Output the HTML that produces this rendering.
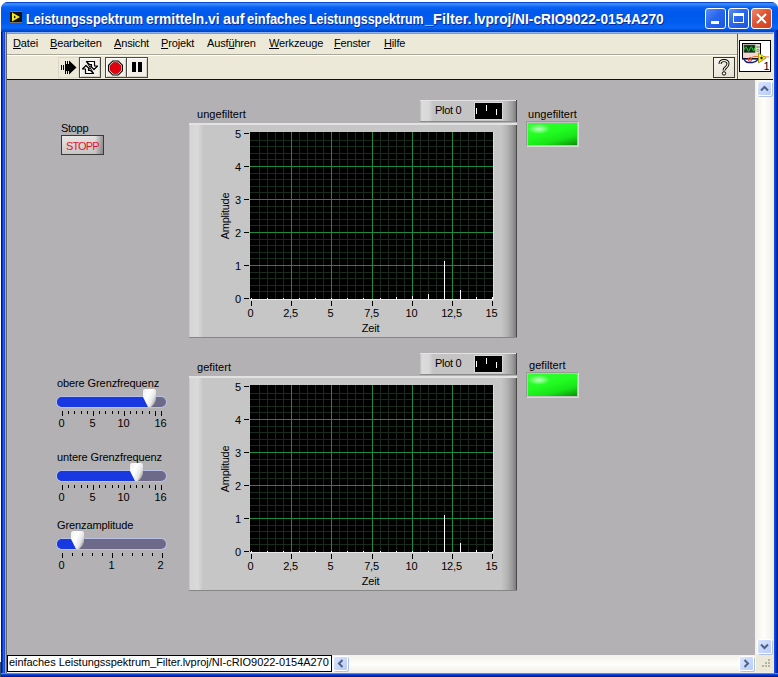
<!DOCTYPE html><html><head><meta charset="utf-8"><style>
html,body{margin:0;padding:0;}
body{width:778px;height:677px;overflow:hidden;position:relative;background:#fff;font-family:"Liberation Sans",sans-serif;}
.a{position:absolute;}
.t{position:absolute;white-space:pre;font-size:11px;line-height:13px;color:#000;}
#win{left:1px;top:2px;width:777px;height:675px;background:#0846d8;border-radius:7px 7px 0 0;}
#title{left:1px;top:2px;width:777px;height:30px;border-radius:7px 7px 0 0;
 background:linear-gradient(#0a48c8 0px,#0a48c8 1px,#3c8cfc 1px,#3282f8 3px,#0a62f4 5px,#0058ec 10px,#005cf0 20px,#0866f8 26px,#0050d8 28px,#0040c0 30px);}
.ttext{top:11px;font-weight:bold;font-size:14px;line-height:17px;color:#fff;transform-origin:0 0;text-shadow:1px 1px 0 #0a2a90;}
#client{left:5px;top:32px;width:769px;height:641px;background:#ece9d8;}
#panel{left:7px;top:80px;width:748px;height:575px;background:#b3b1b3;}
.tbtn{position:absolute;width:21px;height:21px;box-sizing:border-box;}
.xpb{position:absolute;width:21px;height:21px;box-sizing:border-box;border:1px solid #fff;border-radius:3px;}
.u{text-decoration:underline;}
.frame{position:absolute;box-sizing:border-box;}
</style></head><body>
<div class="a" id="win"></div>
<div class="a" id="title"></div>
<svg class="a" style="left:10px;top:11px" width="12" height="12" viewBox="0 0 12 12">
<rect x="0" y="0" width="12" height="12" fill="#101010"/>
<path d="M0.5 0.5 H11.5 M0.5 11.5 H11.5" stroke="#d8d8c0" stroke-width="1" stroke-dasharray="1 1"/>
<path d="M2 1.5 L2 10.5 L10 6 Z" fill="#f4e81c"/>
<path d="M4 4.5 L6 6 L4 7.5 Z" fill="#101010"/>
</svg>
<div class="t ttext" style="left:25.8px;transform:scaleX(0.9055)">Leistungsspektrum</div>
<div class="t ttext" style="left:146.1px;transform:scaleX(0.9853)">ermitteln.vi</div>
<div class="t ttext" style="left:223.1px;transform:scaleX(1.0286)">auf</div>
<div class="t ttext" style="left:246.8px;transform:scaleX(0.9211)">einfaches</div>
<div class="t ttext" style="left:309.1px;transform:scaleX(0.8877)">Leistungsspektrum</div>
<div class="t ttext" style="left:425.4px;transform:scaleX(1.0333)">_Filter.</div>
<div class="t ttext" style="left:474.0px;transform:scaleX(0.9788)">lvproj/NI-cRIO9022-0154A270</div>
<div class="xpb" style="left:705px;top:8px;background:linear-gradient(135deg,#5a8ef8 0%,#2a66ee 45%,#1a55e0 100%);"><div class="a" style="left:5px;top:12px;width:8px;height:3px;background:#fff"></div></div>
<div class="xpb" style="left:728px;top:8px;background:linear-gradient(135deg,#5a8ef8 0%,#2a66ee 45%,#1a55e0 100%);"><div class="a" style="left:4px;top:4px;width:11px;height:10px;box-sizing:border-box;border:1px solid #fff;border-top-width:3px"></div></div>
<div class="xpb" style="left:751px;top:8px;background:linear-gradient(135deg,#f08a68 0%,#e05430 45%,#d04020 100%);">
<svg class="a" style="left:3px;top:3px" width="13" height="13" viewBox="0 0 13 13"><path d="M2 2 L11 11 M11 2 L2 11" stroke="#fff" stroke-width="2"/></svg></div>
<div class="a" id="client"></div>
<div class="a" style="left:5px;top:32px;width:769px;height:1px;background:#8fb0f0"></div>
<div class="a" style="left:6px;top:33px;width:767px;height:1px;background:#9a9888"></div>
<div class="a" style="left:6px;top:33px;width:1px;height:640px;background:#9a9888"></div>
<div class="a" style="left:5px;top:32px;width:1px;height:641px;background:#8fb0f0"></div>
<div class="a" style="left:1px;top:32px;width:1px;height:641px;background:#00158e"></div>
<div class="a" style="left:2px;top:32px;width:1px;height:641px;background:#0538d0"></div>
<div class="a" style="left:3px;top:32px;width:1px;height:641px;background:#2c5cf4"></div>
<div class="a" style="left:4px;top:32px;width:1px;height:641px;background:#1a48c8"></div>
<div class="a" style="left:5px;top:32px;width:1px;height:641px;background:#8eaee0"></div>
<div class="a" style="left:6px;top:32px;width:1px;height:641px;background:#666666"></div>
<div class="a" style="left:774px;top:30px;width:1px;height:647px;background:#1a50e0"></div>
<div class="a" style="left:775px;top:30px;width:1px;height:647px;background:#0040d8"></div>
<div class="a" style="left:776px;top:30px;width:1px;height:647px;background:#0030b8"></div>
<div class="a" style="left:777px;top:30px;width:1px;height:647px;background:#00188e"></div>
<div class="a" style="left:1px;top:673px;width:777px;height:1px;background:#5a8ae8"></div>
<div class="a" style="left:1px;top:674px;width:777px;height:1px;background:#0a44d8"></div>
<div class="a" style="left:1px;top:675px;width:777px;height:1px;background:#0032c0"></div>
<div class="a" style="left:1px;top:676px;width:777px;height:1px;background:#001890"></div>
<div class="t" style="left:13px;top:37px;letter-spacing:-0.15px"><span class="u">D</span>atei</div>
<div class="t" style="left:50px;top:37px;letter-spacing:-0.15px"><span class="u">B</span>earbeiten</div>
<div class="t" style="left:114px;top:37px;letter-spacing:-0.15px"><span class="u">A</span>nsicht</div>
<div class="t" style="left:161px;top:37px;letter-spacing:-0.15px"><span class="u">P</span>rojekt</div>
<div class="t" style="left:207px;top:37px;letter-spacing:-0.15px">Ausf<span class="u">ü</span>hren</div>
<div class="t" style="left:269px;top:37px;letter-spacing:-0.15px"><span class="u">W</span>erkzeuge</div>
<div class="t" style="left:334px;top:37px;letter-spacing:-0.15px"><span class="u">F</span>enster</div>
<div class="t" style="left:384px;top:37px;letter-spacing:-0.15px"><span class="u">H</span>ilfe</div>
<div class="a" style="left:7px;top:54px;width:730px;height:1px;background:#aca899"></div>
<div class="a" style="left:7px;top:55px;width:730px;height:1px;background:#fff"></div>
<div class="a" style="left:737px;top:34px;width:1px;height:45px;background:#5a5a5a"></div>
<div class="a" style="left:7px;top:79px;width:766px;height:1px;background:#101010"></div>
<div class="tbtn" style="left:58px;top:57px;width:21px;background:#ece9d8;border:1px solid #dcd8c8">
<svg class="a" style="left:-1px;top:-1px" width="21" height="21" viewBox="0 0 21 21">
<g fill="#000">
<rect x="3" y="8" width="1" height="5"/><rect x="5" y="8" width="1" height="5"/>
<rect x="7" y="4" width="1" height="3"/><rect x="9" y="4" width="1" height="3"/>
<rect x="7" y="14" width="1" height="3"/><rect x="9" y="14" width="1" height="3"/>
<rect x="7" y="7" width="5" height="7"/>
<path d="M11 3.5 L18.5 10.5 L11 17.5 Z"/>
</g></svg></div>
<div class="tbtn" style="left:79px;top:57px;width:22px;background:#f2f0e8;border:1px solid #4a4a40;box-shadow:inset 1px 1px 0 #fff,inset -1px -1px 0 #d4d0c4">
<svg class="a" style="left:-1px;top:-1px" width="22" height="21" viewBox="0 0 22 21">
<path d="M7.5 4.5 H15.5 V9 H18.5 L15 12.5 L11.5 9 H12.5 V7.5 H10.5 Z" fill="#fff" stroke="#000" stroke-width="1.2" stroke-linejoin="round"/>
<path d="M14.5 16.5 H6.5 V12 H3.5 L7 8.5 L10.5 12 H9.5 V13.5 H11.5 Z" fill="#fff" stroke="#000" stroke-width="1.2" stroke-linejoin="round"/>
<path d="M7.5 4.5 L14.5 16.5" stroke="#000" stroke-width="1"/>
</svg></div>
<div class="tbtn" style="left:105px;top:57px;width:22px;background:#f2f0e8;border:1px solid #4a4a40;box-shadow:inset 1px 1px 0 #fff,inset -1px -1px 0 #d4d0c4">
<svg class="a" style="left:-1px;top:-1px" width="22" height="21" viewBox="0 0 22 21">
<path d="M7.5 3.5 H13.5 L18 8 V14 L13.5 18.5 H7.5 L3 14 V8 Z" fill="#000"/>
<path d="M7.9 4.5 H13.1 L17 8.4 V13.6 L13.1 17.5 H7.9 L4 13.6 V8.4 Z" fill="#f4dcdc"/>
<path d="M8.3 5.5 H12.7 L16 8.8 V13.2 L12.7 16.5 H8.3 L5 13.2 V8.8 Z" fill="#e00010" stroke="#900" stroke-width=".6"/>
</svg></div>
<div class="tbtn" style="left:126px;top:57px;width:22px;background:#f2f0e8;border:1px solid #4a4a40;box-shadow:inset 1px 1px 0 #fff,inset -1px -1px 0 #d4d0c4">
<div class="a" style="left:5px;top:4px;width:4px;height:10px;background:#000"></div>
<div class="a" style="left:11px;top:4px;width:4px;height:10px;background:#000"></div>
</div>
<div class="tbtn" style="left:713px;top:57px;width:22px;background:linear-gradient(160deg,#f8f6f0,#e4e0d4);border:1px solid #3a3628">
<svg class="a" style="left:-1px;top:-1px" width="22" height="21" viewBox="0 0 22 21">
<path d="M7 7 Q7 3.6 11 3.6 Q15 3.6 15 6.8 Q15 8.8 13 10.2 Q11 11.6 11 13.4" stroke="#000" stroke-width="3" fill="none"/>
<path d="M7 7 Q7 3.6 11 3.6 Q15 3.6 15 6.8 Q15 8.8 13 10.2 Q11 11.6 11 13.4" stroke="#fafae4" stroke-width="1.1" fill="none"/>
<circle cx="11" cy="16.4" r="1.7" fill="#fafae4" stroke="#000" stroke-width="1"/>
</svg></div>
<div class="a" style="left:739px;top:40px;width:32px;height:32px;box-sizing:border-box;border:1px solid #000;background:#fff">
<svg class="a" style="left:0;top:0" width="30" height="30" viewBox="0 0 30 30">
<rect x="2.5" y="2.5" width="18" height="15" fill="#d4d0c8" stroke="#000" stroke-width="1"/>
<rect x="4" y="4" width="11" height="7.5" fill="#0a3010" stroke="#606060" stroke-width=".6"/>
<path d="M4.5 8.5 Q5.8 3.5 7.2 8 T9.9 8 T12.6 8 T14.6 7" stroke="#30d040" fill="none" stroke-width="1"/>
<rect x="16" y="4" width="4" height="8" fill="#e6e2c8"/>
<circle cx="17.2" cy="6" r=".9" fill="#888"/><circle cx="19" cy="6" r=".9" fill="#999"/><circle cx="18" cy="9.5" r="1.2" fill="none" stroke="#6a6a40" stroke-width=".7"/>
<rect x="3" y="12" width="17" height="5" fill="#f2d8cc"/>
<rect x="2" y="17" width="18" height="1.6" fill="#101030"/>
<path d="M3.5 17 Q5 21.5 8.5 21.5 L12.5 21.5 Q15.5 21.5 18 18.5" stroke="#101a7a" fill="none" stroke-width="1.3"/>
<path d="M10 17.5 Q14 14.5 18 15.5 L29 16" stroke="#e06828" fill="none" stroke-width=".9"/>
<circle cx="10" cy="18.5" r="1.8" fill="none" stroke="#d83a20" stroke-width="1"/>
<path d="M18.5 12 L18.5 22 L26 17 Z" fill="#f4f020" stroke="#8a8a10" stroke-width=".8"/>
<path d="M20 17 L21.5 15.5 L23 17 L21.5 18.5 Z" fill="#101010"/>
<text x="23.5" y="28.5" font-family="Liberation Sans" font-size="11" fill="#000">1</text>
</svg></div>
<div class="a" id="panel"></div>
<div class="a" style="left:7px;top:80px;width:1px;height:575px;background:#c0b8a8"></div>
<div class="t" style="left:61px;top:122px;letter-spacing:-0.3px">Stopp</div>
<div class="a" style="left:61px;top:135px;width:43px;height:20px;box-sizing:border-box;border:1px solid #3a3a3a;
background:linear-gradient(90deg,rgba(0,0,0,0) 0%,rgba(0,0,0,0) 80%,rgba(60,60,60,.45) 100%),linear-gradient(175deg,#ece8e8 0%,#d8d4d4 50%,#c4c0c0 100%);">
<div class="t" style="left:4px;top:4px;color:#e0142e;letter-spacing:-0.9px">STOPP</div></div>
<div class="t" style="left:197px;top:108px;letter-spacing:0.05px">ungefiltert</div>
<div class="frame" style="left:420px;top:100px;width:97px;height:22px;background:#c4c4c4;
border-top:1px solid #e4e4e4;border-bottom:1px solid #8a8a8a;">
<div class="a" style="left:0;top:0;width:13px;height:20px;background:linear-gradient(90deg,#bdbdbd 0px,#dcdcdc 2px,#d8d8d8 9px,#c4c4c4 13px)"></div>
<div class="a" style="left:83px;top:0;width:13px;height:20px;background:linear-gradient(90deg,#c4c4c4 0%,#b2b2b2 40%,#9a9a9a 75%,#7c7c7c 100%)"></div><div class="a" style="left:96px;top:-1px;width:1px;height:22px;background:#4a4a4a"></div>
<div class="t" style="left:15px;top:3px;letter-spacing:-0.3px">Plot 0</div>
<div class="a" style="left:54px;top:1px;width:29px;height:18px;background:#000;border:1px solid #d8d8d8;box-sizing:border-box">
<div class="a" style="left:1px;top:5px;width:1px;height:6px;background:#fff"></div>
<div class="a" style="left:11px;top:2px;width:1px;height:6px;background:#fff"></div>
<div class="a" style="left:21px;top:6px;width:1px;height:6px;background:#fff"></div>
</div></div>
<div class="frame" style="left:189px;top:123px;width:328px;height:215px;background:#c6c6c6;
border-top:2px solid #e2e2e2;border-bottom:1px solid #868686;">
<div class="a" style="left:0;top:0;width:14px;height:212px;background:linear-gradient(90deg,#bcbcbc 0px,#d6d6d6 1px,#dadada 9px,#d2d2d2 11px,#c6c6c6 14px)"></div>
<div class="a" style="left:312px;top:0;width:15px;height:212px;background:linear-gradient(90deg,#c6c6c6 0%,#b4b4b4 40%,#9a9a9a 75%,#7c7c7c 100%)"></div><div class="a" style="left:327px;top:0;width:1px;height:212px;background:#4a4a4a"></div>
</div>
<svg class="a" style="left:250px;top:132px" width="244" height="168" viewBox="0 0 244 168"><rect width="244" height="168" fill="#000"/><rect x="9" y="0" width="1" height="167" fill="#182a1c"/><rect x="17" y="0" width="1" height="167" fill="#182a1c"/><rect x="25" y="0" width="1" height="167" fill="#182a1c"/><rect x="33" y="0" width="1" height="167" fill="#182a1c"/><rect x="49" y="0" width="1" height="167" fill="#182a1c"/><rect x="57" y="0" width="1" height="167" fill="#182a1c"/><rect x="65" y="0" width="1" height="167" fill="#182a1c"/><rect x="73" y="0" width="1" height="167" fill="#182a1c"/><rect x="89" y="0" width="1" height="167" fill="#182a1c"/><rect x="97" y="0" width="1" height="167" fill="#182a1c"/><rect x="105" y="0" width="1" height="167" fill="#182a1c"/><rect x="113" y="0" width="1" height="167" fill="#182a1c"/><rect x="130" y="0" width="1" height="167" fill="#182a1c"/><rect x="138" y="0" width="1" height="167" fill="#182a1c"/><rect x="146" y="0" width="1" height="167" fill="#182a1c"/><rect x="154" y="0" width="1" height="167" fill="#182a1c"/><rect x="170" y="0" width="1" height="167" fill="#182a1c"/><rect x="178" y="0" width="1" height="167" fill="#182a1c"/><rect x="186" y="0" width="1" height="167" fill="#182a1c"/><rect x="194" y="0" width="1" height="167" fill="#182a1c"/><rect x="210" y="0" width="1" height="167" fill="#182a1c"/><rect x="218" y="0" width="1" height="167" fill="#182a1c"/><rect x="226" y="0" width="1" height="167" fill="#182a1c"/><rect x="234" y="0" width="1" height="167" fill="#182a1c"/><rect x="0" y="8" width="243" height="1" fill="#182a1c"/><rect x="0" y="14" width="243" height="1" fill="#182a1c"/><rect x="0" y="21" width="243" height="1" fill="#182a1c"/><rect x="0" y="27" width="243" height="1" fill="#182a1c"/><rect x="0" y="41" width="243" height="1" fill="#182a1c"/><rect x="0" y="47" width="243" height="1" fill="#182a1c"/><rect x="0" y="54" width="243" height="1" fill="#182a1c"/><rect x="0" y="60" width="243" height="1" fill="#182a1c"/><rect x="0" y="74" width="243" height="1" fill="#182a1c"/><rect x="0" y="80" width="243" height="1" fill="#182a1c"/><rect x="0" y="87" width="243" height="1" fill="#182a1c"/><rect x="0" y="93" width="243" height="1" fill="#182a1c"/><rect x="0" y="107" width="243" height="1" fill="#182a1c"/><rect x="0" y="113" width="243" height="1" fill="#182a1c"/><rect x="0" y="120" width="243" height="1" fill="#182a1c"/><rect x="0" y="126" width="243" height="1" fill="#182a1c"/><rect x="0" y="140" width="243" height="1" fill="#182a1c"/><rect x="0" y="146" width="243" height="1" fill="#182a1c"/><rect x="0" y="153" width="243" height="1" fill="#182a1c"/><rect x="0" y="159" width="243" height="1" fill="#182a1c"/><rect x="41" y="0" width="1" height="167" fill="#1e8a3c"/><rect x="81" y="0" width="1" height="167" fill="#1e8a3c"/><rect x="122" y="0" width="1" height="167" fill="#1e8a3c"/><rect x="162" y="0" width="1" height="167" fill="#1e8a3c"/><rect x="202" y="0" width="1" height="167" fill="#1e8a3c"/><rect x="0" y="34" width="243" height="1" fill="#1e8a3c"/><rect x="0" y="67" width="243" height="1" fill="#1e8a3c"/><rect x="0" y="100" width="243" height="1" fill="#1e8a3c"/><rect x="0" y="133" width="243" height="1" fill="#1e8a3c"/><rect x="0" y="167" width="244" height="1" fill="#e8e8e8"/><rect x="243" y="0" width="1" height="168" fill="#dcdcdc"/><rect x="1" y="166" width="1" height="1" fill="#fff"/><rect x="17" y="166" width="1" height="1" fill="#fff"/><rect x="33" y="166" width="1" height="1" fill="#fff"/><rect x="49" y="166" width="1" height="1" fill="#fff"/><rect x="65" y="166" width="1" height="1" fill="#fff"/><rect x="81" y="166" width="1" height="1" fill="#fff"/><rect x="97" y="166" width="1" height="1" fill="#fff"/><rect x="113" y="166" width="1" height="1" fill="#fff"/><rect x="130" y="166" width="1" height="1" fill="#fff"/><rect x="146" y="165" width="1" height="2" fill="#fff"/><rect x="162" y="164" width="1" height="3" fill="#fff"/><rect x="178" y="162" width="1" height="5" fill="#fff"/><rect x="194" y="129" width="1" height="38" fill="#fff"/><rect x="210" y="158" width="1" height="9" fill="#fff"/><rect x="226" y="165" width="1" height="2" fill="#fff"/><rect x="242" y="165" width="1" height="2" fill="#fff"/></svg>
<div class="a" style="left:244px;top:133px;width:5px;height:1px;background:#000"></div>
<div class="t" style="left:226px;top:128px;width:15px;text-align:right">5</div>
<div class="a" style="left:244px;top:166px;width:5px;height:1px;background:#000"></div>
<div class="t" style="left:226px;top:161px;width:15px;text-align:right">4</div>
<div class="a" style="left:244px;top:199px;width:5px;height:1px;background:#000"></div>
<div class="t" style="left:226px;top:194px;width:15px;text-align:right">3</div>
<div class="a" style="left:244px;top:232px;width:5px;height:1px;background:#000"></div>
<div class="t" style="left:226px;top:227px;width:15px;text-align:right">2</div>
<div class="a" style="left:244px;top:265px;width:5px;height:1px;background:#000"></div>
<div class="t" style="left:226px;top:260px;width:15px;text-align:right">1</div>
<div class="a" style="left:244px;top:298px;width:5px;height:1px;background:#000"></div>
<div class="t" style="left:226px;top:293px;width:15px;text-align:right">0</div>
<div class="a" style="left:251px;top:301px;width:1px;height:5px;background:#000"></div>
<div class="t" style="left:230px;top:307px;width:41px;text-align:center;letter-spacing:-0.2px">0</div>
<div class="a" style="left:291px;top:301px;width:1px;height:5px;background:#000"></div>
<div class="t" style="left:270px;top:307px;width:41px;text-align:center;letter-spacing:-0.2px">2,5</div>
<div class="a" style="left:331px;top:301px;width:1px;height:5px;background:#000"></div>
<div class="t" style="left:310px;top:307px;width:41px;text-align:center;letter-spacing:-0.2px">5</div>
<div class="a" style="left:372px;top:301px;width:1px;height:5px;background:#000"></div>
<div class="t" style="left:351px;top:307px;width:41px;text-align:center;letter-spacing:-0.2px">7,5</div>
<div class="a" style="left:412px;top:301px;width:1px;height:5px;background:#000"></div>
<div class="t" style="left:391px;top:307px;width:41px;text-align:center;letter-spacing:-0.2px">10</div>
<div class="a" style="left:452px;top:301px;width:1px;height:5px;background:#000"></div>
<div class="t" style="left:431px;top:307px;width:41px;text-align:center;letter-spacing:-0.2px">12,5</div>
<div class="a" style="left:492px;top:301px;width:1px;height:5px;background:#000"></div>
<div class="t" style="left:471px;top:307px;width:41px;text-align:center;letter-spacing:-0.2px">15</div>
<div class="t" style="left:350px;top:322px;width:41px;text-align:center;letter-spacing:-0.2px">Zeit</div>
<div class="t" style="left:200px;top:210px;width:50px;text-align:center;transform:rotate(-90deg);transform-origin:25px 6px;letter-spacing:-0.25px">Amplitude</div>
<div class="t" style="left:528px;top:108px;letter-spacing:0.05px">ungefiltert</div>
<div class="a" style="left:526px;top:121px;width:53px;height:26px;box-sizing:border-box;background:#c0c0c0;border:1px solid;border-color:#9a9a9a #d8d8d8 #d8d8d8 #9a9a9a">
<div class="a" style="left:1px;top:1px;width:49px;height:22px;background:radial-gradient(ellipse 11px 5px at 11px 6px,#c0ffc0 0%,rgba(120,255,120,0) 100%),linear-gradient(165deg,#34ff34 0%,#22fc22 45%,#18e418 72%,#0ea80e 92%,#0a8a0a 100%)"></div></div>
<div class="t" style="left:197px;top:361px;letter-spacing:0.05px">gefitert</div>
<div class="frame" style="left:420px;top:353px;width:97px;height:22px;background:#c4c4c4;
border-top:1px solid #e4e4e4;border-bottom:1px solid #8a8a8a;">
<div class="a" style="left:0;top:0;width:13px;height:20px;background:linear-gradient(90deg,#bdbdbd 0px,#dcdcdc 2px,#d8d8d8 9px,#c4c4c4 13px)"></div>
<div class="a" style="left:83px;top:0;width:13px;height:20px;background:linear-gradient(90deg,#c4c4c4 0%,#b2b2b2 40%,#9a9a9a 75%,#7c7c7c 100%)"></div><div class="a" style="left:96px;top:-1px;width:1px;height:22px;background:#4a4a4a"></div>
<div class="t" style="left:15px;top:3px;letter-spacing:-0.3px">Plot 0</div>
<div class="a" style="left:54px;top:1px;width:29px;height:18px;background:#000;border:1px solid #d8d8d8;box-sizing:border-box">
<div class="a" style="left:1px;top:5px;width:1px;height:6px;background:#fff"></div>
<div class="a" style="left:11px;top:2px;width:1px;height:6px;background:#fff"></div>
<div class="a" style="left:21px;top:6px;width:1px;height:6px;background:#fff"></div>
</div></div>
<div class="frame" style="left:189px;top:376px;width:328px;height:215px;background:#c6c6c6;
border-top:2px solid #e2e2e2;border-bottom:1px solid #868686;">
<div class="a" style="left:0;top:0;width:14px;height:212px;background:linear-gradient(90deg,#bcbcbc 0px,#d6d6d6 1px,#dadada 9px,#d2d2d2 11px,#c6c6c6 14px)"></div>
<div class="a" style="left:312px;top:0;width:15px;height:212px;background:linear-gradient(90deg,#c6c6c6 0%,#b4b4b4 40%,#9a9a9a 75%,#7c7c7c 100%)"></div><div class="a" style="left:327px;top:0;width:1px;height:212px;background:#4a4a4a"></div>
</div>
<svg class="a" style="left:250px;top:385px" width="244" height="168" viewBox="0 0 244 168"><rect width="244" height="168" fill="#000"/><rect x="9" y="0" width="1" height="167" fill="#182a1c"/><rect x="17" y="0" width="1" height="167" fill="#182a1c"/><rect x="25" y="0" width="1" height="167" fill="#182a1c"/><rect x="33" y="0" width="1" height="167" fill="#182a1c"/><rect x="49" y="0" width="1" height="167" fill="#182a1c"/><rect x="57" y="0" width="1" height="167" fill="#182a1c"/><rect x="65" y="0" width="1" height="167" fill="#182a1c"/><rect x="73" y="0" width="1" height="167" fill="#182a1c"/><rect x="89" y="0" width="1" height="167" fill="#182a1c"/><rect x="97" y="0" width="1" height="167" fill="#182a1c"/><rect x="105" y="0" width="1" height="167" fill="#182a1c"/><rect x="113" y="0" width="1" height="167" fill="#182a1c"/><rect x="130" y="0" width="1" height="167" fill="#182a1c"/><rect x="138" y="0" width="1" height="167" fill="#182a1c"/><rect x="146" y="0" width="1" height="167" fill="#182a1c"/><rect x="154" y="0" width="1" height="167" fill="#182a1c"/><rect x="170" y="0" width="1" height="167" fill="#182a1c"/><rect x="178" y="0" width="1" height="167" fill="#182a1c"/><rect x="186" y="0" width="1" height="167" fill="#182a1c"/><rect x="194" y="0" width="1" height="167" fill="#182a1c"/><rect x="210" y="0" width="1" height="167" fill="#182a1c"/><rect x="218" y="0" width="1" height="167" fill="#182a1c"/><rect x="226" y="0" width="1" height="167" fill="#182a1c"/><rect x="234" y="0" width="1" height="167" fill="#182a1c"/><rect x="0" y="8" width="243" height="1" fill="#182a1c"/><rect x="0" y="14" width="243" height="1" fill="#182a1c"/><rect x="0" y="21" width="243" height="1" fill="#182a1c"/><rect x="0" y="27" width="243" height="1" fill="#182a1c"/><rect x="0" y="41" width="243" height="1" fill="#182a1c"/><rect x="0" y="47" width="243" height="1" fill="#182a1c"/><rect x="0" y="54" width="243" height="1" fill="#182a1c"/><rect x="0" y="60" width="243" height="1" fill="#182a1c"/><rect x="0" y="74" width="243" height="1" fill="#182a1c"/><rect x="0" y="80" width="243" height="1" fill="#182a1c"/><rect x="0" y="87" width="243" height="1" fill="#182a1c"/><rect x="0" y="93" width="243" height="1" fill="#182a1c"/><rect x="0" y="107" width="243" height="1" fill="#182a1c"/><rect x="0" y="113" width="243" height="1" fill="#182a1c"/><rect x="0" y="120" width="243" height="1" fill="#182a1c"/><rect x="0" y="126" width="243" height="1" fill="#182a1c"/><rect x="0" y="140" width="243" height="1" fill="#182a1c"/><rect x="0" y="146" width="243" height="1" fill="#182a1c"/><rect x="0" y="153" width="243" height="1" fill="#182a1c"/><rect x="0" y="159" width="243" height="1" fill="#182a1c"/><rect x="41" y="0" width="1" height="167" fill="#1e8a3c"/><rect x="81" y="0" width="1" height="167" fill="#1e8a3c"/><rect x="122" y="0" width="1" height="167" fill="#1e8a3c"/><rect x="162" y="0" width="1" height="167" fill="#1e8a3c"/><rect x="202" y="0" width="1" height="167" fill="#1e8a3c"/><rect x="0" y="34" width="243" height="1" fill="#1e8a3c"/><rect x="0" y="67" width="243" height="1" fill="#1e8a3c"/><rect x="0" y="100" width="243" height="1" fill="#1e8a3c"/><rect x="0" y="133" width="243" height="1" fill="#1e8a3c"/><rect x="0" y="167" width="244" height="1" fill="#e8e8e8"/><rect x="243" y="0" width="1" height="168" fill="#dcdcdc"/><rect x="1" y="166" width="1" height="1" fill="#fff"/><rect x="17" y="166" width="1" height="1" fill="#fff"/><rect x="33" y="166" width="1" height="1" fill="#fff"/><rect x="49" y="166" width="1" height="1" fill="#fff"/><rect x="65" y="166" width="1" height="1" fill="#fff"/><rect x="81" y="166" width="1" height="1" fill="#fff"/><rect x="97" y="166" width="1" height="1" fill="#fff"/><rect x="113" y="166" width="1" height="1" fill="#fff"/><rect x="130" y="166" width="1" height="1" fill="#fff"/><rect x="146" y="166" width="1" height="1" fill="#fff"/><rect x="162" y="166" width="1" height="1" fill="#fff"/><rect x="178" y="166" width="1" height="1" fill="#fff"/><rect x="194" y="130" width="1" height="37" fill="#fff"/><rect x="210" y="158" width="1" height="9" fill="#fff"/><rect x="226" y="165" width="1" height="2" fill="#fff"/><rect x="242" y="166" width="1" height="1" fill="#fff"/></svg>
<div class="a" style="left:244px;top:386px;width:5px;height:1px;background:#000"></div>
<div class="t" style="left:226px;top:381px;width:15px;text-align:right">5</div>
<div class="a" style="left:244px;top:419px;width:5px;height:1px;background:#000"></div>
<div class="t" style="left:226px;top:414px;width:15px;text-align:right">4</div>
<div class="a" style="left:244px;top:452px;width:5px;height:1px;background:#000"></div>
<div class="t" style="left:226px;top:447px;width:15px;text-align:right">3</div>
<div class="a" style="left:244px;top:485px;width:5px;height:1px;background:#000"></div>
<div class="t" style="left:226px;top:480px;width:15px;text-align:right">2</div>
<div class="a" style="left:244px;top:518px;width:5px;height:1px;background:#000"></div>
<div class="t" style="left:226px;top:513px;width:15px;text-align:right">1</div>
<div class="a" style="left:244px;top:551px;width:5px;height:1px;background:#000"></div>
<div class="t" style="left:226px;top:546px;width:15px;text-align:right">0</div>
<div class="a" style="left:251px;top:554px;width:1px;height:5px;background:#000"></div>
<div class="t" style="left:230px;top:560px;width:41px;text-align:center;letter-spacing:-0.2px">0</div>
<div class="a" style="left:291px;top:554px;width:1px;height:5px;background:#000"></div>
<div class="t" style="left:270px;top:560px;width:41px;text-align:center;letter-spacing:-0.2px">2,5</div>
<div class="a" style="left:331px;top:554px;width:1px;height:5px;background:#000"></div>
<div class="t" style="left:310px;top:560px;width:41px;text-align:center;letter-spacing:-0.2px">5</div>
<div class="a" style="left:372px;top:554px;width:1px;height:5px;background:#000"></div>
<div class="t" style="left:351px;top:560px;width:41px;text-align:center;letter-spacing:-0.2px">7,5</div>
<div class="a" style="left:412px;top:554px;width:1px;height:5px;background:#000"></div>
<div class="t" style="left:391px;top:560px;width:41px;text-align:center;letter-spacing:-0.2px">10</div>
<div class="a" style="left:452px;top:554px;width:1px;height:5px;background:#000"></div>
<div class="t" style="left:431px;top:560px;width:41px;text-align:center;letter-spacing:-0.2px">12,5</div>
<div class="a" style="left:492px;top:554px;width:1px;height:5px;background:#000"></div>
<div class="t" style="left:471px;top:560px;width:41px;text-align:center;letter-spacing:-0.2px">15</div>
<div class="t" style="left:350px;top:575px;width:41px;text-align:center;letter-spacing:-0.2px">Zeit</div>
<div class="t" style="left:200px;top:463px;width:50px;text-align:center;transform:rotate(-90deg);transform-origin:25px 6px;letter-spacing:-0.25px">Amplitude</div>
<div class="t" style="left:529px;top:359px;letter-spacing:0.05px">gefiltert</div>
<div class="a" style="left:526px;top:372px;width:53px;height:26px;box-sizing:border-box;background:#c0c0c0;border:1px solid;border-color:#9a9a9a #d8d8d8 #d8d8d8 #9a9a9a">
<div class="a" style="left:1px;top:1px;width:49px;height:22px;background:radial-gradient(ellipse 11px 5px at 11px 6px,#c0ffc0 0%,rgba(120,255,120,0) 100%),linear-gradient(165deg,#34ff34 0%,#22fc22 45%,#18e418 72%,#0ea80e 92%,#0a8a0a 100%)"></div></div>
<div class="t" style="left:57px;top:377px;letter-spacing:-0.1px">obere Grenzfrequenz</div>
<div class="a" style="left:56px;top:396px;width:111px;height:12px;border-radius:6px;background:#b9c1e6"></div>
<div class="a" style="left:57px;top:397px;width:109px;height:10px;border-radius:5px;background:#6c6a88;overflow:hidden"><div class="a" style="left:0;top:0;width:92px;height:10px;background:#1838e2"></div></div>
<svg class="a" style="left:143px;top:389px" width="14" height="19" viewBox="0 0 14 19"><defs><linearGradient id="kg" x1="0" x2="1" y1="0" y2=".6"><stop offset="0" stop-color="#f0f0f0"/><stop offset=".45" stop-color="#ffffff"/><stop offset=".8" stop-color="#e6e6e6"/><stop offset="1" stop-color="#a8a8a8"/></linearGradient></defs><path d="M0 2 Q0 0 2 0 L11 0 Q13 0 13 2 L13 11 Q12 15 8 18 L5 18 L0 8 Z" fill="url(#kg)"/></svg>
<div class="a" style="left:62px;top:411px;width:1px;height:5px;background:#000"></div>
<div class="a" style="left:68px;top:411px;width:1px;height:3px;background:#000"></div>
<div class="a" style="left:74px;top:411px;width:1px;height:3px;background:#000"></div>
<div class="a" style="left:81px;top:411px;width:1px;height:3px;background:#000"></div>
<div class="a" style="left:87px;top:411px;width:1px;height:3px;background:#000"></div>
<div class="a" style="left:93px;top:411px;width:1px;height:5px;background:#000"></div>
<div class="a" style="left:99px;top:411px;width:1px;height:3px;background:#000"></div>
<div class="a" style="left:105px;top:411px;width:1px;height:3px;background:#000"></div>
<div class="a" style="left:112px;top:411px;width:1px;height:3px;background:#000"></div>
<div class="a" style="left:118px;top:411px;width:1px;height:3px;background:#000"></div>
<div class="a" style="left:124px;top:411px;width:1px;height:5px;background:#000"></div>
<div class="a" style="left:130px;top:411px;width:1px;height:3px;background:#000"></div>
<div class="a" style="left:136px;top:411px;width:1px;height:3px;background:#000"></div>
<div class="a" style="left:142px;top:411px;width:1px;height:3px;background:#000"></div>
<div class="a" style="left:149px;top:411px;width:1px;height:3px;background:#000"></div>
<div class="a" style="left:155px;top:411px;width:1px;height:5px;background:#000"></div>
<div class="a" style="left:161px;top:411px;width:1px;height:5px;background:#000"></div>
<div class="t" style="left:46px;top:417px;width:31px;text-align:center;letter-spacing:-0.2px">0</div>
<div class="t" style="left:77px;top:417px;width:31px;text-align:center;letter-spacing:-0.2px">5</div>
<div class="t" style="left:108px;top:417px;width:31px;text-align:center;letter-spacing:-0.2px">10</div>
<div class="t" style="left:145px;top:417px;width:31px;text-align:center;letter-spacing:-0.2px">16</div>
<div class="t" style="left:57px;top:451px;letter-spacing:-0.1px">untere Grenzfrequenz</div>
<div class="a" style="left:56px;top:470px;width:111px;height:12px;border-radius:6px;background:#b9c1e6"></div>
<div class="a" style="left:57px;top:471px;width:109px;height:10px;border-radius:5px;background:#6c6a88;overflow:hidden"><div class="a" style="left:0;top:0;width:79px;height:10px;background:#1838e2"></div></div>
<svg class="a" style="left:130px;top:463px" width="14" height="19" viewBox="0 0 14 19"><defs><linearGradient id="kg" x1="0" x2="1" y1="0" y2=".6"><stop offset="0" stop-color="#f0f0f0"/><stop offset=".45" stop-color="#ffffff"/><stop offset=".8" stop-color="#e6e6e6"/><stop offset="1" stop-color="#a8a8a8"/></linearGradient></defs><path d="M0 2 Q0 0 2 0 L11 0 Q13 0 13 2 L13 11 Q12 15 8 18 L5 18 L0 8 Z" fill="url(#kg)"/></svg>
<div class="a" style="left:62px;top:485px;width:1px;height:5px;background:#000"></div>
<div class="a" style="left:68px;top:485px;width:1px;height:3px;background:#000"></div>
<div class="a" style="left:74px;top:485px;width:1px;height:3px;background:#000"></div>
<div class="a" style="left:81px;top:485px;width:1px;height:3px;background:#000"></div>
<div class="a" style="left:87px;top:485px;width:1px;height:3px;background:#000"></div>
<div class="a" style="left:93px;top:485px;width:1px;height:5px;background:#000"></div>
<div class="a" style="left:99px;top:485px;width:1px;height:3px;background:#000"></div>
<div class="a" style="left:105px;top:485px;width:1px;height:3px;background:#000"></div>
<div class="a" style="left:112px;top:485px;width:1px;height:3px;background:#000"></div>
<div class="a" style="left:118px;top:485px;width:1px;height:3px;background:#000"></div>
<div class="a" style="left:124px;top:485px;width:1px;height:5px;background:#000"></div>
<div class="a" style="left:130px;top:485px;width:1px;height:3px;background:#000"></div>
<div class="a" style="left:136px;top:485px;width:1px;height:3px;background:#000"></div>
<div class="a" style="left:142px;top:485px;width:1px;height:3px;background:#000"></div>
<div class="a" style="left:149px;top:485px;width:1px;height:3px;background:#000"></div>
<div class="a" style="left:155px;top:485px;width:1px;height:5px;background:#000"></div>
<div class="a" style="left:161px;top:485px;width:1px;height:5px;background:#000"></div>
<div class="t" style="left:46px;top:491px;width:31px;text-align:center;letter-spacing:-0.2px">0</div>
<div class="t" style="left:77px;top:491px;width:31px;text-align:center;letter-spacing:-0.2px">5</div>
<div class="t" style="left:108px;top:491px;width:31px;text-align:center;letter-spacing:-0.2px">10</div>
<div class="t" style="left:145px;top:491px;width:31px;text-align:center;letter-spacing:-0.2px">16</div>
<div class="t" style="left:57px;top:519px;letter-spacing:-0.1px">Grenzamplitude</div>
<div class="a" style="left:56px;top:538px;width:111px;height:12px;border-radius:6px;background:#b9c1e6"></div>
<div class="a" style="left:57px;top:539px;width:109px;height:10px;border-radius:5px;background:#6c6a88;overflow:hidden"><div class="a" style="left:0;top:0;width:20px;height:10px;background:#1838e2"></div></div>
<svg class="a" style="left:71px;top:531px" width="14" height="19" viewBox="0 0 14 19"><defs><linearGradient id="kg" x1="0" x2="1" y1="0" y2=".6"><stop offset="0" stop-color="#f0f0f0"/><stop offset=".45" stop-color="#ffffff"/><stop offset=".8" stop-color="#e6e6e6"/><stop offset="1" stop-color="#a8a8a8"/></linearGradient></defs><path d="M0 2 Q0 0 2 0 L11 0 Q13 0 13 2 L13 11 Q12 15 8 18 L5 18 L0 8 Z" fill="url(#kg)"/></svg>
<div class="a" style="left:62px;top:553px;width:1px;height:5px;background:#000"></div>
<div class="a" style="left:72px;top:553px;width:1px;height:3px;background:#000"></div>
<div class="a" style="left:82px;top:553px;width:1px;height:3px;background:#000"></div>
<div class="a" style="left:92px;top:553px;width:1px;height:3px;background:#000"></div>
<div class="a" style="left:102px;top:553px;width:1px;height:3px;background:#000"></div>
<div class="a" style="left:112px;top:553px;width:1px;height:5px;background:#000"></div>
<div class="a" style="left:122px;top:553px;width:1px;height:3px;background:#000"></div>
<div class="a" style="left:132px;top:553px;width:1px;height:3px;background:#000"></div>
<div class="a" style="left:142px;top:553px;width:1px;height:3px;background:#000"></div>
<div class="a" style="left:152px;top:553px;width:1px;height:3px;background:#000"></div>
<div class="a" style="left:162px;top:553px;width:1px;height:5px;background:#000"></div>
<div class="t" style="left:46px;top:559px;width:31px;text-align:center;letter-spacing:-0.2px">0</div>
<div class="t" style="left:96px;top:559px;width:31px;text-align:center;letter-spacing:-0.2px">1</div>
<div class="t" style="left:145px;top:559px;width:31px;text-align:center;letter-spacing:-0.2px">2</div>
<div class="a" style="left:755px;top:80px;width:18px;height:575px;background:linear-gradient(90deg,#f3f1ec,#fefefb 50%,#f0eee6)"></div>
<div class="a" style="left:7px;top:655px;width:766px;height:18px;background:linear-gradient(#f3f1ec,#fefefb 50%,#f0eee6)"></div>
<div style="position:absolute;width:15px;height:15px;box-sizing:border-box;border:1px solid #fff;border-radius:2px;background:linear-gradient(135deg,#dbe6fd,#b8cbf8);box-shadow:1px 1px 0 #b0c0e0;left:757px;top:81px"><svg class="a" style="left:2px;top:3px" width="9" height="7"><path d="M1 5.5 L4.5 2 L8 5.5" stroke="#4d6185" stroke-width="2" fill="none"/></svg></div>
<div style="position:absolute;width:15px;height:15px;box-sizing:border-box;border:1px solid #fff;border-radius:2px;background:linear-gradient(135deg,#dbe6fd,#b8cbf8);box-shadow:1px 1px 0 #b0c0e0;left:757px;top:639px"><svg class="a" style="left:2px;top:3px" width="9" height="7"><path d="M1 1.5 L4.5 5 L8 1.5" stroke="#4d6185" stroke-width="2" fill="none"/></svg></div>
<div style="position:absolute;width:15px;height:15px;box-sizing:border-box;border:1px solid #fff;border-radius:2px;background:linear-gradient(135deg,#dbe6fd,#b8cbf8);box-shadow:1px 1px 0 #b0c0e0;left:333px;top:656px"><svg class="a" style="left:3px;top:2px" width="7" height="9"><path d="M5.5 1 L2 4.5 L5.5 8" stroke="#4d6185" stroke-width="2" fill="none"/></svg></div>
<div style="position:absolute;width:15px;height:15px;box-sizing:border-box;border:1px solid #fff;border-radius:2px;background:linear-gradient(135deg,#dbe6fd,#b8cbf8);box-shadow:1px 1px 0 #b0c0e0;left:739px;top:656px"><svg class="a" style="left:3px;top:2px" width="7" height="9"><path d="M1.5 1 L5 4.5 L1.5 8" stroke="#4d6185" stroke-width="2" fill="none"/></svg></div>
<div class="a" style="left:7px;top:655px;width:325px;height:17px;box-sizing:border-box;border:1px solid #000;background:#fff"><div class="t" style="left:1px;top:0px;letter-spacing:-0.05px">einfaches Leistungsspektrum_Filter.lvproj/NI-cRIO9022-0154A270</div></div>
<div class="a" style="left:756px;top:655px;width:17px;height:17px;background:#ece9d8"></div>
<svg class="a" style="left:758px;top:657px" width="14" height="14"><rect x="10" y="2" width="2" height="2" fill="#b8b4a4"/><rect x="7" y="5" width="2" height="2" fill="#b8b4a4"/><rect x="10" y="5" width="2" height="2" fill="#b8b4a4"/><rect x="4" y="8" width="2" height="2" fill="#b8b4a4"/><rect x="7" y="8" width="2" height="2" fill="#b8b4a4"/><rect x="10" y="8" width="2" height="2" fill="#b8b4a4"/></svg>
<div class="a" style="left:0;top:662px;width:1px;height:15px;background:#305070"></div>
</body></html>
